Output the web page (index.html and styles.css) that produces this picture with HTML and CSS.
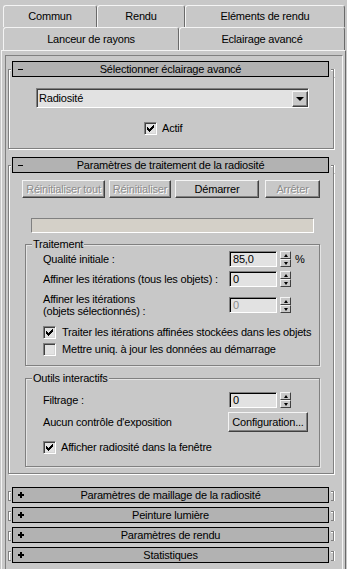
FILE: index.html
```html
<!DOCTYPE html>
<html lang="fr">
<head>
  <meta charset="UTF-8">
  <title>Eclairage avancé</title>
  <link rel="stylesheet" href="styles.css">
</head>
<body>
  <svg class="defs" width="0" height="0">
    <symbol id="tick" viewBox="0 0 11 11">
      <rect x="2" y="4" width="1" height="3"/>
      <rect x="3" y="5" width="1" height="3"/>
      <rect x="4" y="6" width="1" height="3"/>
      <rect x="5" y="5" width="1" height="3"/>
      <rect x="6" y="4" width="1" height="3"/>
      <rect x="7" y="3" width="1" height="3"/>
      <rect x="8" y="2" width="1" height="3"/>
    </symbol>
    <symbol id="plus" viewBox="0 0 6 6">
      <rect x="0" y="2" width="6" height="2"/>
      <rect x="2" y="0" width="2" height="6"/>
    </symbol>
  </svg>

  <!-- onglets -->
  <div class="tabs">
    <div class="tab-row">
      <div class="tab tab-commun">Commun</div>
      <div class="tab tab-rendu">Rendu</div>
      <div class="tab tab-elements">Eléments de rendu</div>
    </div>
    <div class="tab-row front">
      <div class="tab tab-lanceur">Lanceur de rayons</div>
      <div class="tab tab-eclairage">Eclairage avancé</div>
    </div>
  </div>

  <div class="panel">
    <div class="scroll">

      <!-- Sélectionner éclairage avancé -->
      <div class="rollout">
        <div class="roll-head">
          <span class="brk-l"></span>
          <div class="roll-title"><span class="minus"></span><span class="roll-name">Sélectionner éclairage avancé</span></div>
          <span class="brk-r"></span>
        </div>
        <div class="roll-body body-select">
          <div class="combo">
            <span class="combo-value">Radiosité</span>
            <span class="combo-btn"><span class="arrow-down"></span></span>
          </div>
          <div class="check-row check-actif">
            <span class="chk"><svg width="11" height="11"><use href="#tick"/></svg></span>
            <span>Actif</span>
          </div>
        </div>
      </div>

      <!-- Paramètres de traitement de la radiosité -->
      <div class="rollout rollout-second">
        <div class="roll-head">
          <span class="brk-l"></span>
          <div class="roll-title"><span class="minus"></span><span class="roll-name">Paramètres de traitement de la radiosité</span></div>
          <span class="brk-r"></span>
        </div>
        <div class="roll-body body-radio">
          <div class="btn-row">
            <button class="btn btn-reset-all" disabled>Réinitialiser tout</button>
            <button class="btn btn-reset" disabled>Réinitialiser</button>
            <button class="btn btn-start">Démarrer</button>
            <button class="btn btn-stop" disabled>Arrêter</button>
          </div>
          <div class="progress"></div>

          <div class="group group-traitement">
            <div class="group-title">Traitement</div>
            <div class="row">
              <span class="row-label">Qualité initiale :</span>
              <span class="field">85,0</span>
              <span class="spin"><span class="spin-up"></span><span class="spin-down"></span></span>
              <span class="unit">%</span>
            </div>
            <div class="row row-gap">
              <span class="row-label">Affiner les itérations (tous les objets) :</span>
              <span class="field">0</span>
              <span class="spin"><span class="spin-up"></span><span class="spin-down"></span></span>
            </div>
            <div class="row row-tall">
              <span class="row-label two-lines">Affiner les itérations<br>(objets sélectionnés) :</span>
              <span class="field disabled">0</span>
              <span class="spin"><span class="spin-up"></span><span class="spin-down"></span></span>
            </div>
            <div class="check-row check-first">
              <span class="chk"><svg width="11" height="11"><use href="#tick"/></svg></span>
              <span>Traiter les itérations affinées stockées dans les objets</span>
            </div>
            <div class="check-row check-next">
              <span class="chk"></span>
              <span>Mettre uniq. à jour les données au démarrage</span>
            </div>
          </div>

          <div class="group group-outils">
            <div class="group-title">Outils interactifs</div>
            <div class="row row-filtre">
              <span class="row-label">Filtrage :</span>
              <span class="field">0</span>
              <span class="spin"><span class="spin-up"></span><span class="spin-down"></span></span>
            </div>
            <div class="row row-expo">
              <span class="row-label">Aucun contrôle d'exposition</span>
              <button class="btn btn-config">Configuration...</button>
            </div>
            <div class="check-row check-view">
              <span class="chk"><svg width="11" height="11"><use href="#tick"/></svg></span>
              <span>Afficher radiosité dans la fenêtre</span>
            </div>
          </div>
        </div>
      </div>

      <!-- rollouts fermés -->
      <div class="rollout closed first-closed">
        <div class="roll-head">
          <span class="brk-l"></span>
          <div class="roll-title"><svg class="plus" width="6" height="6"><use href="#plus"/></svg><span class="roll-name">Paramètres de maillage de la radiosité</span></div>
          <span class="brk-r"></span>
        </div>
      </div>
      <div class="rollout closed">
        <div class="roll-head">
          <span class="brk-l"></span>
          <div class="roll-title"><svg class="plus" width="6" height="6"><use href="#plus"/></svg><span class="roll-name">Peinture lumière</span></div>
          <span class="brk-r"></span>
        </div>
      </div>
      <div class="rollout closed">
        <div class="roll-head">
          <span class="brk-l"></span>
          <div class="roll-title"><svg class="plus" width="6" height="6"><use href="#plus"/></svg><span class="roll-name">Paramètres de rendu</span></div>
          <span class="brk-r"></span>
        </div>
      </div>
      <div class="rollout closed">
        <div class="roll-head">
          <span class="brk-l"></span>
          <div class="roll-title"><svg class="plus" width="6" height="6"><use href="#plus"/></svg><span class="roll-name">Statistiques</span></div>
          <span class="brk-r"></span>
        </div>
      </div>

    </div>
  </div>
</body>
</html>
```

FILE: styles.css
```css
:root {
  --face: #c8c8c8;
  --light: #f4f4f4;
  --shadow: #808080;
  --dark: #404040;
  --field: #e2e2e2;
  --head: #b2b2b2;
  --grey-text: #8c8c8c;
}

* {
  box-sizing: border-box;
}

body {
  margin: 0;
  width: 347px;
  height: 569px;
  overflow: hidden;
  background: var(--face);
  color: #000;
  font-family: "Liberation Sans", Arial, sans-serif;
  font-size: 11px;
  letter-spacing: -0.2px;
  line-height: 13px;
}

.defs {
  position: absolute;
}

/* onglets */
.tabs {
  padding: 5px 0 0 3px;
}
.tab-row {
  display: flex;
  height: 22px;
}
.tab-row.front {
  height: 23px;
}
.tab {
  display: flex;
  align-items: center;
  justify-content: center;
  border-top: 1px solid var(--light);
  border-left: 1px solid var(--light);
  border-right: 1px solid #6a6a6a;
  border-radius: 3px 3px 0 0;
}
.tab-commun { width: 94px; }
.tab-rendu { width: 88px; }
.tab-elements { width: 160px; }
.tab-lanceur { width: 176px; }
.tab-eclairage { width: 166px; }

/* panneau */
.panel {
  margin-left: 1px;
  width: 345px;
  height: 519px;
  padding: 4px 2px 0 3px;
  border-top: 1px solid var(--light);
  border-left: 1px solid var(--light);
  border-right: 1px solid #6a6a6a;
}
.scroll {
  height: 520px;
  padding: 5px 0 0 2px;
  border: 1px solid;
  border-color: var(--shadow) var(--light) var(--light) var(--shadow);
}

/* rollouts */
.rollout {
  width: 326px;
}
.rollout-second {
  margin-top: 8px;
}
.rollout.closed {
  margin-top: 4px;
}
.rollout.first-closed {
  margin-top: 13px;
}
.roll-head {
  display: flex;
  height: 16px;
}
.brk-l,
.brk-r {
  width: 3px;
  height: 8px;
  margin-top: 8px;
  border-top: 1px solid var(--shadow);
}
.brk-l {
  border-left: 1px solid var(--shadow);
  box-shadow: inset 1px 1px 0 #fff;
}
.brk-r {
  margin-left: 2px;
  border-right: 1px solid var(--shadow);
  box-shadow: 1px 0 0 #fff, inset 0 1px 0 #fff;
}
.closed .brk-l,
.closed .brk-r {
  height: 10px;
  margin-top: 4px;
  border-bottom: 1px solid var(--shadow);
}
.roll-title {
  display: grid;
  grid-template-columns: 20px 1fr 20px;
  align-items: center;
  width: 317px;
  margin-left: 1px;
  background: var(--head);
  border: 1px solid #000;
}
.roll-name {
  grid-column: 2;
  text-align: center;
  white-space: nowrap;
}
.minus {
  grid-column: 1;
  grid-row: 1;
  width: 5px;
  height: 1px;
  margin-left: 5px;
  background: #000;
}
.plus {
  grid-column: 1;
  grid-row: 1;
  margin-left: 5px;
  fill: #000;
}
.roll-body {
  border: 1px solid var(--shadow);
  border-top: none;
  box-shadow: 1px 1px 0 #fff, inset 1px 0 0 #fff;
}
.body-select {
  padding: 11px 0 13px;
}
.body-radio {
  padding: 7px 0 6px;
}

/* contrôles */
.combo {
  display: flex;
  align-items: center;
  justify-content: space-between;
  width: 273px;
  height: 20px;
  margin-left: 27px;
  padding: 0 0 0 2px;
  background: var(--field);
  border: 1px solid;
  border-color: var(--shadow) #fff #fff var(--shadow);
  box-shadow: inset 1px 1px 0 var(--dark);
}
.combo-btn {
  display: flex;
  align-items: center;
  justify-content: center;
  width: 16px;
  height: 16px;
  margin: 1px 0 0 0;
  background: var(--face);
  border: 1px solid;
  border-color: var(--light) var(--dark) var(--dark) var(--light);
  box-shadow: inset -1px -1px 0 var(--shadow);
}
.arrow-down {
  width: 0;
  height: 0;
  border-left: 4px solid transparent;
  border-right: 4px solid transparent;
  border-top: 4px solid #000;
}

.check-row {
  display: flex;
  align-items: center;
  gap: 6px;
  height: 13px;
}
.check-actif {
  margin-top: 14px;
  padding-left: 135px;
  gap: 5px;
}
.chk {
  flex: 0 0 13px;
  height: 13px;
  padding: 0;
  background: var(--field);
  border: 1px solid;
  border-color: var(--shadow) #fff #fff var(--shadow);
  box-shadow: inset 1px 1px 0 var(--dark), inset -1px -1px 0 #d6d6d6;
}
.chk svg {
  display: block;
  fill: #000;
  shape-rendering: crispEdges;
}

.btn {
  height: 18px;
  padding: 0;
  background: var(--face);
  font: inherit;
  letter-spacing: inherit;
  color: #000;
  border: 1px solid;
  border-color: var(--light) var(--dark) var(--dark) var(--light);
  box-shadow: inset -1px -1px 0 var(--shadow);
}
.btn:disabled {
  color: var(--grey-text);
  text-shadow: 1px 1px 0 #fff;
}
.btn-row {
  display: flex;
  padding-left: 13px;
}
.btn-reset-all { width: 83px; }
.btn-reset { width: 62px; margin-left: 4px; }
.btn-start { width: 84px; margin-left: 4px; }
.btn-stop { width: 55px; margin-left: 6px; }
.btn-config {
  width: 80px;
  height: 20px;
  margin-left: -1px;
}

.progress {
  width: 283px;
  height: 15px;
  margin: 20px 0 0 22px;
  background: #d4d0c8;
  border: 1px solid;
  border-color: var(--shadow) #fff #fff var(--shadow);
}

/* groupes */
.group {
  width: 295px;
  margin-left: 16px;
  padding-left: 17px;
  border: 1px solid var(--shadow);
  box-shadow: 1px 1px 0 #e4e4e4, inset 1px 1px 0 #e4e4e4;
}
.group-traitement {
  margin-top: 11px;
  padding-bottom: 9px;
}
.group-outils {
  margin-top: 12px;
  padding-bottom: 12px;
}
.group-title {
  display: table;
  margin: -7px 0 0 -11px;
  padding: 0 1px;
  background: var(--face);
}
.row {
  display: flex;
  align-items: center;
  height: 16px;
}
.row-gap {
  margin-top: 4px;
}
.row-tall {
  height: 26px;
  margin-top: 5px;
}
.row-label {
  flex: 0 0 186px;
  white-space: nowrap;
}
.two-lines {
  line-height: 12px;
}
.field {
  width: 48px;
  height: 16px;
  padding: 1px 0 0 3px;
  background: var(--field);
  border: 1px solid;
  border-color: var(--shadow) #fff #fff var(--shadow);
  box-shadow: inset 1px 1px 0 #000;
}
.field.disabled {
  color: var(--grey-text);
}
.spin {
  display: flex;
  flex-direction: column;
  width: 11px;
  height: 16px;
  margin-left: 3px;
}
.spin-up,
.spin-down {
  display: flex;
  align-items: center;
  justify-content: center;
  height: 8px;
  background: var(--face);
  border: 1px solid;
  border-color: var(--light) var(--dark) var(--dark) var(--light);
}
.spin-up::after,
.spin-down::after {
  content: "";
  width: 0;
  height: 0;
  border-left: 2.5px solid transparent;
  border-right: 2.5px solid transparent;
}
.spin-up::after {
  border-bottom: 3px solid #000;
}
.spin-down::after {
  border-top: 3px solid #000;
}
.unit {
  margin-left: 4px;
}
.check-first {
  margin-top: 8px;
}
.check-next {
  margin-top: 4px;
}
.row-filtre {
  margin-top: 7px;
}
.row-expo {
  height: 20px;
  margin-top: 4px;
}
.check-view {
  margin-top: 9px;
  gap: 5px;
}
```
